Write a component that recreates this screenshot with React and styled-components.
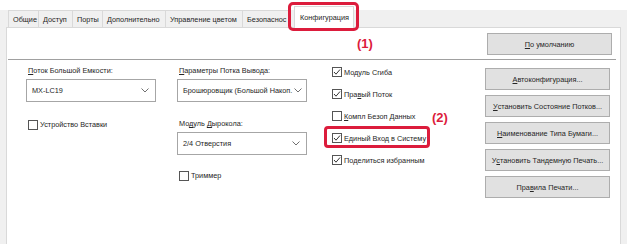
import React from 'react';
import styled, { createGlobalStyle } from 'styled-components';

const Global = createGlobalStyle`
  html, body { margin: 0; padding: 0; background: #fff; }
  body { font-family: "Liberation Sans", Arial, sans-serif; font-size: 7.3px; color: #262626; }
`;

const RED = '#dc1c3c';

const Window = styled.div`
  width: 627px;
  height: 244px;
  overflow: hidden;
  background: #fff;
  padding-top: 10px;
  box-sizing: border-box;
`;

const Frame = styled.div`
  height: 234px;
  background: #f0f0f0;
  padding: 0 6px 0 6px;
  display: flex;
  flex-direction: column;
`;

const TabRow = styled.div`
  height: 17px;
  display: flex;
  align-items: flex-end;
  padding-left: 2px;
  position: relative;
  z-index: 2;
`;

const Tab = styled.div`
  height: 17px;
  box-sizing: border-box;
  padding: 0 4px;
  display: flex;
  align-items: center;
  border: 1px solid #d9d9d9;
  border-right: none;
  border-bottom: none;
  background: #f0f0f0;
  white-space: nowrap;
  overflow: hidden;
  width: ${(p) => p.w}px;
`;

const ActiveWrap = styled.div`
  position: relative;
  margin-left: 4px;
  align-self: flex-end;
  &::after {
    content: '';
    position: absolute;
    left: -6px;
    top: -4px;
    right: -5px;
    bottom: -4px;
    border: 3px solid ${RED};
    border-radius: 5px;
  }
`;

const ActiveTab = styled.div`
  height: 22px;
  width: 60px;
  box-sizing: border-box;
  padding: 0 5px;
  display: flex;
  align-items: center;
  background: #fff;
  border: 1px solid #d9d9d9;
  border-bottom: none;
  margin-bottom: -1px;
  white-space: nowrap;
`;

const Panel = styled.div`
  flex: 1;
  background: #fff;
  border: 1px solid #d9d9d9;
  border-bottom: none;
  position: relative;
`;

const TopBar = styled.div`
  height: 31px;
  display: flex;
  justify-content: flex-end;
  align-items: flex-start;
  padding: 5px 8px 0 0;
  box-sizing: border-box;
`;

const Divider = styled.div`
  height: 1px;
  background: #a0a0a0;
  margin: 0 4px 0 1px;
`;

const Button = styled.div`
  width: 125px;
  height: 22px;
  box-sizing: border-box;
  background: #e1e1e1;
  border: 1px solid #adadad;
  display: flex;
  align-items: center;
  justify-content: center;
  white-space: nowrap;
  margin-top: ${(p) => p.mt || 0}px;
`;

const Body = styled.div`
  display: flex;
  padding-left: 19px;
`;

const Column = styled.div`
  width: ${(p) => p.w}px;
  margin-right: ${(p) => p.gap || 0}px;
  display: flex;
  flex-direction: column;
  align-items: flex-start;
`;

const Label = styled.div`
  line-height: 11px;
  margin-top: ${(p) => p.mt || 0}px;
  padding-left: 2px;
  white-space: nowrap;
`;

const Select = styled.div`
  width: 100%;
  height: 23px;
  box-sizing: border-box;
  border: 1px solid #a6a6a6;
  margin-top: ${(p) => p.mt || 0}px;
  display: flex;
  align-items: center;
  justify-content: space-between;
  padding: 0 6px 0 5px;
  white-space: nowrap;
  overflow: hidden;
  svg { flex: none; margin-left: 2px; }
`;

const CheckRow = styled.div`
  display: inline-flex;
  align-items: center;
  height: ${(p) => p.h || 11}px;
  margin-top: ${(p) => p.mt || 0}px;
  padding-left: ${(p) => p.pl || 0}px;
  white-space: nowrap;
  position: relative;
`;

const Box = styled.span`
  width: 10px;
  height: 10px;
  box-sizing: border-box;
  border: 1px solid #555;
  background: #fff;
  margin-right: 2px;
  display: inline-flex;
  align-items: center;
  justify-content: center;
  flex: none;
`;

const Highlight = styled.div`
  position: absolute;
  left: -8px;
  top: -1px;
  width: 106px;
  height: 22px;
  border: 3px solid ${RED};
  border-radius: 4px;
  box-sizing: border-box;
`;

const Note = styled.div`
  position: absolute;
  color: ${RED};
  font-weight: bold;
  font-size: 13px;
  left: ${(p) => p.x}px;
  top: ${(p) => p.y}px;
`;

const U = styled.span`
  text-decoration: underline;
`;

function Chevron() {
  return (
    <svg width="8" height="5" viewBox="0 0 8 5">
      <polyline points="0.5,0.5 4,4 7.5,0.5" fill="none" stroke="#707070" strokeWidth="1" />
    </svg>
  );
}

function Check({ checked, marked, children, ...rest }) {
  return (
    <CheckRow {...rest}>
      {marked && <Highlight />}
      <Box>
        {checked && (
          <svg width="8" height="8" viewBox="0 0 8 8">
            <polyline points="1,4 3,6.2 7,1.5" fill="none" stroke="#333" strokeWidth="1" />
          </svg>
        )}
      </Box>
      {children}
    </CheckRow>
  );
}

const tabs = [
  ['Общие', 30],
  ['Доступ', 34],
  ['Порты', 30],
  ['Дополнительно', 63],
  ['Управление цветом', 77],
  ['Безопаснос', 48],
];

export default function App() {
  return (
    <>
      <Global />
      <Window>
        <Frame>
          <TabRow>
            {tabs.map(([t, w]) => (
              <Tab key={t} w={w}>{t}</Tab>
            ))}
            <ActiveWrap>
              <ActiveTab>Конфигурация</ActiveTab>
            </ActiveWrap>
          </TabRow>
          <Panel>
            <Note x={350} y={8}>(1)</Note>
            <Note x={425} y={82}>(2)</Note>
            <TopBar>
              <Button><U>П</U>о умолчанию</Button>
            </TopBar>
            <Divider />
            <Body>
              <Column w={130} gap={21}>
                <Label mt={5}><U>П</U>оток Большой Емкости:</Label>
                <Select mt={3}>MX-LC19<Chevron /></Select>
                <Check mt={17} pl={2}>Устройство Вставки</Check>
              </Column>
              <Column w={130} gap={25}>
                <Label mt={5}><U>П</U>араметры Потка Вывода:</Label>
                <Select mt={3}>Брошюровщик (Большой Накоп.<Chevron /></Select>
                <Label mt={16}>Мо<U>д</U>уль <U>Д</U>ырокола:</Label>
                <Select mt={3}>2/4 Отверстия<Chevron /></Select>
                <Check mt={15} pl={2}>Триммер</Check>
              </Column>
              <Column w={153}>
                <Check checked h={22} mt={1}>Модуль Сгиба</Check>
                <Check checked h={22}>Пра<U>в</U>ый Поток</Check>
                <Check h={22}><U>К</U>омпл Безоп Данных</Check>
                <Check checked marked h={22}>Единый Вход в Систему</Check>
                <Check checked h={22}>По<U>д</U>елиться избранным</Check>
              </Column>
              <Column w={125}>
                <Button mt={8}><U>А</U>втоконфигурация...</Button>
                <Button mt={5}><U>У</U>становить Состояние Потков...</Button>
                <Button mt={5}><U>Н</U>аименование Типа Бумаги...</Button>
                <Button mt={5}>У<U>с</U>тановить Тандемную Печать...</Button>
                <Button mt={5}>Пра<U>в</U>ила Печати...</Button>
              </Column>
            </Body>
          </Panel>
        </Frame>
      </Window>
    </>
  );
}
